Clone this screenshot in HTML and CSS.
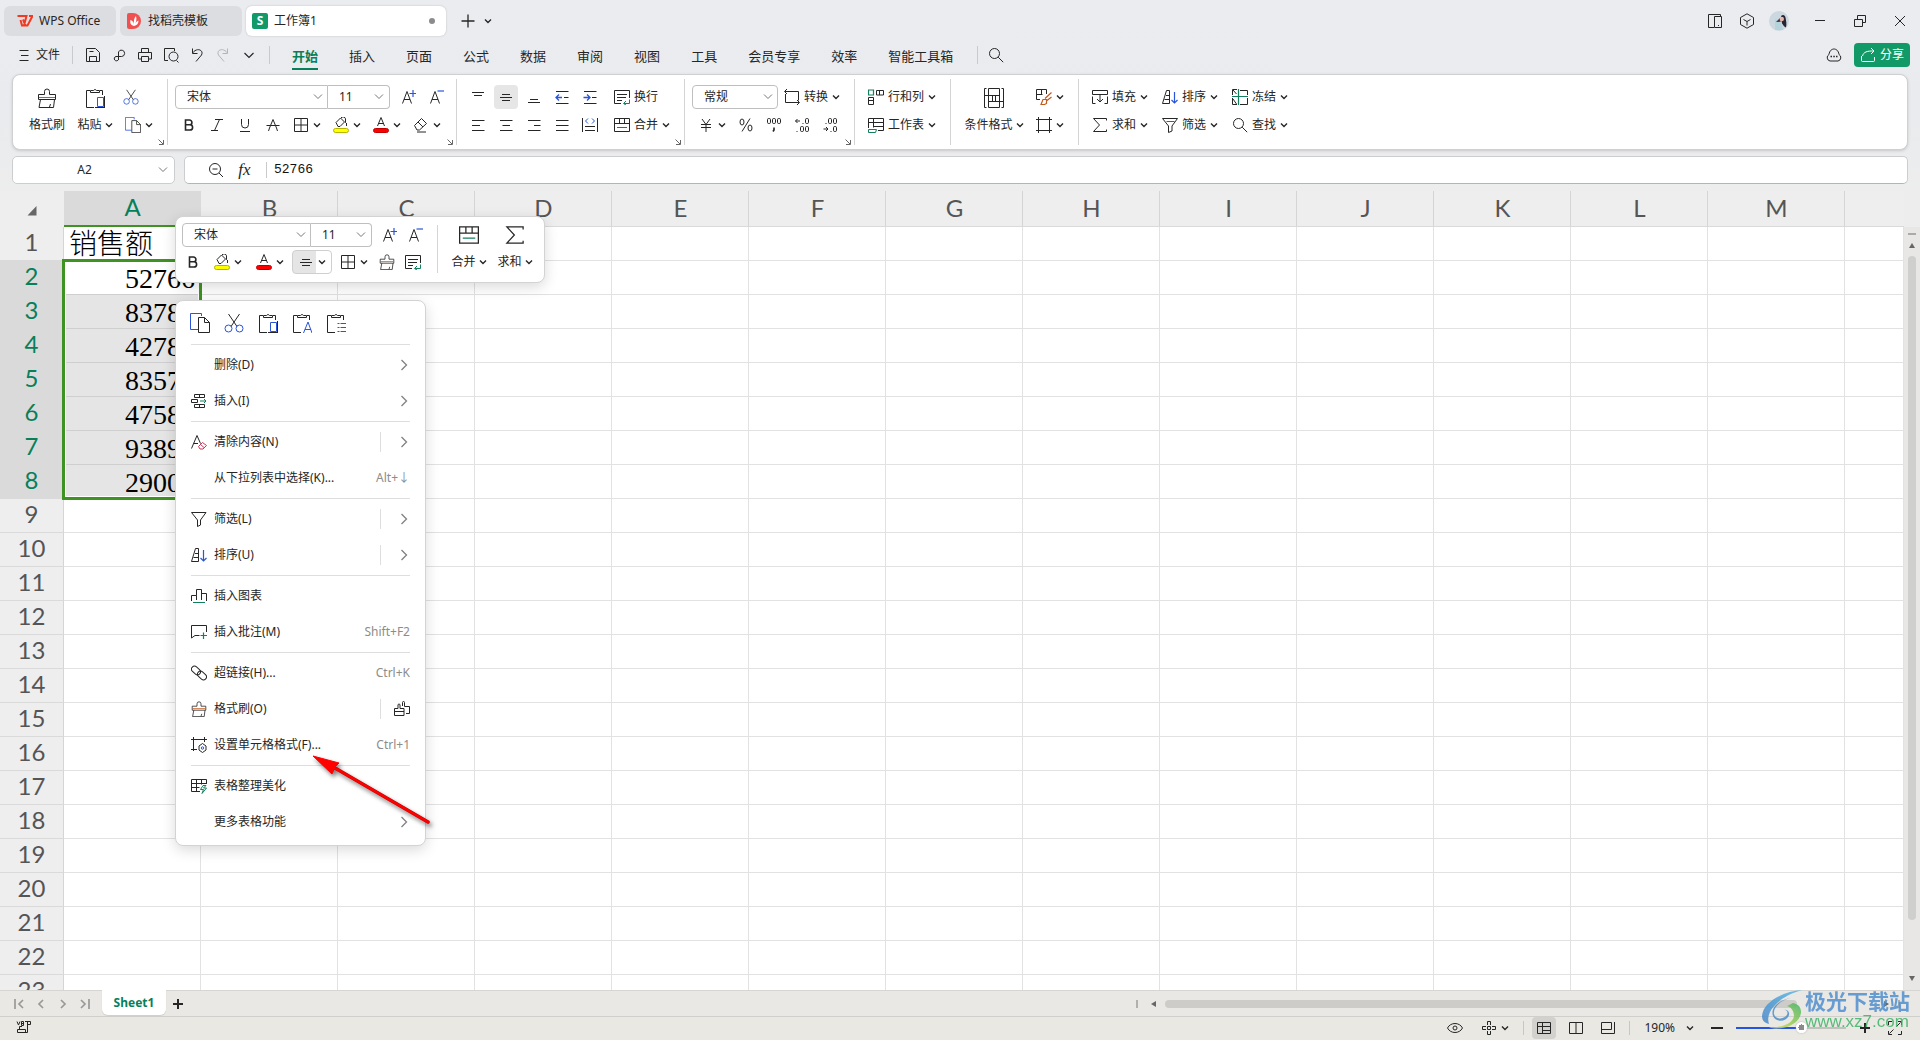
FILE: index.html
```html
<!DOCTYPE html>
<html lang="zh-CN">
<head>
<meta charset="utf-8">
<title>工作簿1 - WPS Office</title>
<link rel="stylesheet" href="styles.css">
</head>
<body>
<svg class="sprite" aria-hidden="true">
  <symbol id="chev" viewBox="0 0 8 8"><path d="M1 2.500 4 5.500 7 2.500" stroke-width="1.400"/></symbol>
  <symbol id="chevl" viewBox="0 0 12 12"><path d="M1.500 4 6 8.500 10.500 4" stroke-width="1.200"/></symbol>
  <symbol id="right" viewBox="0 0 12 12"><path d="M3.500 1 8.500 6 3.500 11" stroke="#808080" stroke-width="1.300"/></symbol>
  <symbol id="launch" viewBox="0 0 6 6"><path d="M.5.5 5 5M5.500 1v4.500H1" stroke="#666"/></symbol>
  <symbol id="burger" viewBox="0 0 16 16"><path d="M3.500 3.500h9M5 8.500h7.500M3.500 13.500h9"/></symbol>
  <symbol id="save" viewBox="0 0 16 16"><path d="M1.500 1.500h9l4 4v9h-13zM4.500 14.500v-5h7v5M4.500 4.500h4"/></symbol>
  <symbol id="exportp" viewBox="0 0 16 16"><path d="M7.500 13V5a3.200 3.200 0 1 1 3.200 4.500H5a2.200 2.200 0 1 0 2.500 3"/></symbol>
  <symbol id="print" viewBox="0 0 16 16"><path d="M4.500 5V1.500h7V5M4.500 12H1.500V5.500h13V12h-3M4.500 9.500h7v5h-7z"/></symbol>
  <symbol id="preview" viewBox="0 0 16 16"><path d="M5 13.500H1.500v-12h10V4M13.500 13.500l2 2"/><circle cx="10.500" cy="9.500" r="4.500"/></symbol>
  <symbol id="undo" viewBox="0 0 16 16"><path d="M3.500 1.500v5h5M3.500 6C8 0 15 3 12.500 8L7 14.500"/></symbol>
  <symbol id="redo" viewBox="0 0 16 16"><path d="M12.500 1.500v5h-5M12.500 6C8 0 1 3 3.500 8L9 14.500"/></symbol>
  <symbol id="search" viewBox="0 0 16 16"><circle cx="6.500" cy="6.500" r="5"/><path d="M10.200 10.200l5 5"/></symbol>
  <symbol id="zoomout" viewBox="0 0 16 16"><circle cx="7" cy="7" r="5.500"/><path d="M11 11l4 4M4.500 7h5"/></symbol>
  <symbol id="brush" viewBox="0 0 20 20"><path d="M1.500 6.500h6v-3a2.500 2.500 0 0 1 5 0v3h6v5h-17zM3.500 11.500l-1.500 8h14.500l1-8M12.500 19l1-3"/><path d="M2 9.500h16" stroke="#c55a1e"/></symbol>
  <symbol id="paste" viewBox="0 0 20 20"><path d="M9 19.500H1.500v-17H5M5.500 4.500h9v-2h-3a1.700 1.700 0 0 0-3 0h-3zM15 2.500h2.500V7"/><path d="M12.500 9.500h6v9h-6z" stroke="#2a55d8"/><path d="M10 19.500h10M19.500 8v12"/></symbol>
  <symbol id="pastea" viewBox="0 0 20 20"><path d="M9 19.500H1.500v-17H5M5.500 4.500h9v-2h-3a1.700 1.700 0 0 0-3 0h-3zM15 2.500h2.500V7"/><path d="M11.500 20l4.500-11 4 11M13 16.500h6" stroke="#2a55d8"/></symbol>
  <symbol id="pastel" viewBox="0 0 20 20"><path d="M9 19.500H1.500v-17H5M5.500 4.500h9v-2h-3a1.700 1.700 0 0 0-3 0h-3zM15 2.500h2.500V7"/><path d="M11.500 10.500h2M11.500 14.500h2M11.500 18.500h2M14.500 10.500H20M14.500 14.500H20M14.500 18.500H20" stroke="#2a55d8"/></symbol>
  <symbol id="cut" viewBox="0 0 20 20"><path d="M4.500 1l8.500 12.500M15.500 1L7 13.500"/><g stroke="#2a55d8"><circle cx="4.500" cy="15.500" r="3.500"/><circle cx="15.500" cy="15.500" r="3.500"/></g></symbol>
  <symbol id="copy" viewBox="0 0 20 20"><path d="M8 16.500H.5V.5h11V3" stroke="#2a55d8"/><path d="M8.500 4.500h6l5 5v10h-11zM14.500 4.500v5h5"/></symbol>
  <symbol id="aplus" viewBox="0 0 16 16"><path d="M1.500 14.500 6 2.500l4.500 12M3 10.500h6"/><path d="M8.500 4.500H15M12 1v7" stroke="#2a55d8" stroke-width="1.200"/></symbol>
  <symbol id="aminus" viewBox="0 0 16 16"><path d="M1.500 14.500 6 2.500l4.500 12M3 10.500h6"/><path d="M8.500 2H15" stroke="#2a55d8" stroke-width="1.200"/></symbol>
  <symbol id="bold" viewBox="0 0 16 16"><path d="M4.500 3h4a2.300 2.300 0 0 1 0 4.800h-4zM4.500 7.800H9a2.600 2.600 0 0 1 0 5.200H4.500z" stroke-width="1.600"/></symbol>
  <symbol id="italic" viewBox="0 0 16 16"><path d="M6 2.500h8M2 13.500h7M10.500 2.500l-5 11"/></symbol>
  <symbol id="under" viewBox="0 0 16 16"><path d="M4.500 2v5.500a3.500 3.500 0 0 0 7 0V2M3 14.500h10"/></symbol>
  <symbol id="strike" viewBox="0 0 16 16"><path d="M8 2.500 4.500 11M8 2.500 11.500 11M1.500 8.500h13M4.500 11 3.500 14M11.500 11l1 3"/></symbol>
  <symbol id="border" viewBox="0 0 16 16"><path d="M1.500 1.500h13v13h-13zM8 1.500v13M1.500 8h13"/></symbol>
  <symbol id="fill" viewBox="0 0 16 16"><path d="M3 5.500 7.500 1l4 4-4.500 4.500h-2zM8 .8a2.500 2 0 0 1 4.500 1v4M13.500 6v3"/><rect x=".5" y="11.500" width="15" height="4" rx="2" fill="#ff0" stroke="#b5b500"/></symbol>
  <symbol id="color" viewBox="0 0 16 16"><path d="M4.500 9 8 .5 11.500 9M5.800 6.500h4.500"/><rect x=".5" y="11.500" width="15" height="4" rx="2" fill="#f00" stroke="#c00000"/></symbol>
  <symbol id="erase" viewBox="0 0 16 16"><path d="M1.500 8.500l7-7 5 5-7 6.500h-2.500zM5 5l5 5M4 15h9"/></symbol>
  <symbol id="atop" viewBox="0 0 16 16"><path d="M2 3.500h12M4 6.500h8"/></symbol>
  <symbol id="amid" viewBox="0 0 16 16"><path d="M4 5.500h8M2 8.500h12M4 11.500h8"/></symbol>
  <symbol id="abot" viewBox="0 0 16 16"><path d="M4 10.500h8M2 13.500h12"/></symbol>
  <symbol id="outdent" viewBox="0 0 16 16"><path d="M2 2.500h12.500M10 8.500h4.500M2 14.500h12.500"/><path d="M8 8.500H2M5 5.500l-3 3 3 3" stroke="#2a55d8" stroke-width="1.300"/></symbol>
  <symbol id="indent" viewBox="0 0 16 16"><path d="M2 2.500h12.500M10 8.500h4.500M2 14.500h12.500"/><path d="M1.500 8.500h6M5 5.500l3 3-3 3" stroke="#2a55d8" stroke-width="1.300"/></symbol>
  <symbol id="aleft" viewBox="0 0 16 16"><path d="M2 3.500h12.500M2 8.500h8M2 13.500h12.500"/></symbol>
  <symbol id="acen" viewBox="0 0 16 16"><path d="M2 3.500h12.500M4.500 8.500h7.500M2 13.500h12.500"/></symbol>
  <symbol id="aright" viewBox="0 0 16 16"><path d="M2 3.500h12.500M8 8.500h6.500M2 13.500h12.500"/></symbol>
  <symbol id="ajust" viewBox="0 0 16 16"><path d="M2 3.500h12.500M2 8.500h12.500M2 13.500h12.500"/></symbol>
  <symbol id="dist" viewBox="0 0 16 16"><path d="M.5 1v14M15.500 1v14M3 9.500h10M3 13.500h10"/><path d="M6 1.500 3.500 4 6 6.500M10 1.500 12.500 4 10 6.500" stroke="#2a55d8"/></symbol>
  <symbol id="wrap" viewBox="0 0 16 16"><path d="M15.500 9V1.500H.5v13H7M3 5.500h10M3 8.500h9M3 11.500h5"/><path d="M15.500 10.500v4H10M12 12l-2.500 2.500L12 16" stroke="#12805c"/></symbol>
  <symbol id="merge" viewBox="0 0 16 16"><path d="M.5 1.500h15v13H.5zM.5 6.500h15M5.500 1.500v5M10.500 1.500v5"/><path d="M3 10.500h10" stroke="#12805c"/></symbol>
  <symbol id="convert" viewBox="0 0 16 16"><path d="M3 0 .5 2.500 3 5M1 2.500h13.500v9M1.500 5v8.500H15M13 11l2.500 2.500L13 16"/></symbol>
  <symbol id="yen" viewBox="0 0 16 16"><path d="M4 2l4 5.500L12 2M8 7.500V15M3 7.500h10M3 10.500h10"/></symbol>
  <symbol id="pct" viewBox="0 0 16 16"><path d="M12 1.500 4 14.500"/><ellipse cx="4" cy="5" rx="2" ry="3"/><ellipse cx="12" cy="11" rx="2" ry="3"/></symbol>
  <symbol id="thou" viewBox="0 0 16 16"><rect x="1.500" y="1.500" width="3" height="5" rx="1.200"/><rect x="6.500" y="1.500" width="3" height="5" rx="1.200"/><rect x="11.500" y="1.500" width="3" height="5" rx="1.200"/><path d="M8 10.500v2.500l-1 1.500" stroke-width="1.600"/></symbol>
  <symbol id="incd" viewBox="0 0 16 16"><path d="M6 4H1.500M3.500 2l-2 2 2 2M8.500 6.500h1M2.500 14.500h1"/><rect x="11.500" y="1.500" width="3" height="5" rx="1.200"/><rect x="6.500" y="9.500" width="3" height="5" rx="1.200"/><rect x="11.500" y="9.500" width="3" height="5" rx="1.200"/></symbol>
  <symbol id="decd" viewBox="0 0 16 16"><path d="M1.500 12H6M4 10l2 2-2 2M8.500 14.500h1M3.500 6.500h1"/><rect x="6.500" y="1.500" width="3" height="5" rx="1.200"/><rect x="11.500" y="1.500" width="3" height="5" rx="1.200"/><rect x="11.500" y="9.500" width="3" height="5" rx="1.200"/></symbol>
  <symbol id="rowcol" viewBox="0 0 16 16"><path d="M8.500 1.500h7v4.500h-7zM11.500 1.500V6M.5 8.500h5v7h-5zM.5 11.500h5"/><path d="M.5 1H5.500v5H.5z" stroke="#12805c" stroke-width="1.200"/></symbol>
  <symbol id="wsheet" viewBox="0 0 16 16"><path d="M.5 11V1.500h15v12H10M.5 5.500h15M5.500 1.500v9M5.500 9.500H15"/><path d="M.5 12.500h8l-1 3h-7z" stroke="#12805c"/></symbol>
  <symbol id="condf" viewBox="0 0 20 20"><path d="M2.500.5h-2v19h2M17.500.5h2v19h-2M4.500.5h11v19h-11zM.5 7.500h15M4.500 13.500h15M8.500 7.500v6M11.500 7.500v6"/></symbol>
  <symbol id="cellst" viewBox="0 0 16 16"><path d="M4 10.500H.5V.5h10V5M.5 5.500h6M5.500.5v5"/><path d="M15.500 3.500 9 9.500M15.500 8 11 11.500M5 15.500l2-5h3.500v4l-2 1z" stroke="#c55a1e" stroke-width="1.200"/></symbol>
  <symbol id="frame" viewBox="0 0 16 16"><path d="M0 2.500h16M0 13.500h16M2.500 0v16M13.500 0v16"/></symbol>
  <symbol id="fillin" viewBox="0 0 16 16"><path d="M.5 5.500v-4h15v4zM.5 7.500v7h3M15.500 7.500v7h-3M8 6v6.500M5 10l3 3 3-3"/></symbol>
  <symbol id="sort" viewBox="0 0 16 16"><path d="M.5 14.500 4.500 1.500h3v13zM2.500 10.500h5M4 6.500h3.500"/><path d="M12.500 3v11M9.500 11l3 3 3-3" stroke="#2a55d8" stroke-width="1.200"/></symbol>
  <symbol id="freeze" viewBox="0 0 16 16"><path d="M5 .5H.5V6M1 1l3.500 4M8 1.500h7.500V6M.5 9v6.500H5M1 10l3.500 5M8 15.500h7.500V9"/><path d="M0 7.500h16M6.500 0v16" stroke="#12805c" stroke-width="1.200"/></symbol>
  <symbol id="sum" viewBox="0 0 16 16"><path d="M14.500 3.500v-2h-13L7.500 8l-6 6.500h13v-2"/></symbol>
  <symbol id="filter" viewBox="0 0 16 16"><path d="M.5 1.500h14.500L9.500 9v5l-3 1.500V9z"/></symbol>
  <symbol id="filterg" viewBox="0 0 16 16"><path d="M.5 1.500h15L10 9v5l-3.500 1.500V9z"/><path d="M4.500 4.500h8" stroke="#12805c"/></symbol>
  <symbol id="ins" viewBox="0 0 16 16"><path d="M3.500 1.500h10v3h-10zM8.500 1.500v3M.5 6.500h6v3h-6zM3.500 11.500h10v3h-10zM8.500 11.500v3"/><path d="M9 8h6M13 6l2 2-2 2" stroke="#12805c"/></symbol>
  <symbol id="clear" viewBox="0 0 16 16"><path d="M.5 14.500 6 1.500l3.500 8M2.500 9.500H7"/><path d="M7.500 12.500 11.500 8.500 15.500 11.500 12 15H9zM9.500 10.500l3.500 3" stroke="#d0365a"/></symbol>
  <symbol id="chart" viewBox="0 0 16 16"><path d="M.5 13V7.500h5V12M5.500 7.500v-6h5V12M10.500 5.500h5V13"/><path d="M2 14.500h12" stroke="#12805c"/></symbol>
  <symbol id="note" viewBox="0 0 16 16"><path d="M8.500 11.500H4L.5 14V1.500h15V8"/><path d="M9.500 11.500H16M12.500 8.500v6.500" stroke="#12805c" stroke-width="1.200"/></symbol>
  <symbol id="link" viewBox="0 0 16 16"><rect x="0" y="2.500" width="10" height="6" rx="3" transform="rotate(42 5 5.500)"/><rect x="6" y="7.500" width="10" height="6" rx="3" transform="rotate(42 11 10.500)"/></symbol>
  <symbol id="brushes" viewBox="0 0 16 16"><path d="M.5 7.500h3.500V4a1 1 0 0 1 2 0v3.500H10v7H.5zM.5 10.500H10M8.500 5V1.500a1 1 0 0 1 2 0v4h5v7H12"/></symbol>
  <symbol id="cellfmt" viewBox="0 0 16 16"><path d="M0 2.500h16M2.500 0v14M0 12.500h6M13.500 0v5"/><path d="M8 9l3.500-2.500L15 9v4l-3.500 2.500L8 13z"/><circle cx="11.500" cy="11" r="1.200" stroke="#2a55d8"/></symbol>
  <symbol id="beaut" viewBox="0 0 16 16"><path d="M9 13.500H.5v-12h15V6M.5 5.500h15M.5 9.500h8M5.500 1.500v12M10.500 1.500v5"/><path d="M12 7.500l-2.500 4h3l-1.500 4 4.500-5.500h-3l2.500-2.500z" stroke="#12805c"/></symbol>
  <symbol id="panel" viewBox="0 0 16 16"><path d="M7 14.500H1.500v-13h12V3M7.500 3.500h7v11h-7zM11 12.500h1"/></symbol>
  <symbol id="cube" viewBox="0 0 16 16"><path d="M8 .8l6.500 3.700v7L8 15.200 1.500 11.500v-7zM4.500 6.500 8 8.500l3.500-2M8 8.500v4"/></symbol>
  <symbol id="min" viewBox="0 0 16 16"><path d="M3 7.500h10"/></symbol>
  <symbol id="restore" viewBox="0 0 16 16"><path d="M2.500 6.500h8v7h-8zM5.500 6V2.500h8v7H11"/></symbol>
  <symbol id="close" viewBox="0 0 16 16"><path d="M3 3l10 10M13 3 3 13"/></symbol>
  <symbol id="cloud" viewBox="0 0 16 16"><path d="M4 14a3.500 3.500 0 0 1-1-6.500C3.500 3.500 6 2 8 2s4.500 1.500 5 5.500A3.500 3.500 0 0 1 12 14z"/><path d="M4.500 9.500h1.500M7.300 9.500h1.500M10 9.500h1.500" stroke-width="1.500"/></symbol>
  <symbol id="share" viewBox="0 0 16 16"><path d="M1.500 9v4.500a1 1 0 0 0 1 1h11a1 1 0 0 0 1-1V10M2.500 9C3.500 5 7 3.800 14 4M11 1l3 3-3 3"/></symbol>
  <symbol id="plus" viewBox="0 0 16 16"><path d="M8 1.500v13M1.500 8h13" stroke-width="1.300"/></symbol>
  <symbol id="first" viewBox="0 0 16 16"><path d="M4 3v10M12 4 8 8l4 4" stroke-width="1.700"/></symbol>
  <symbol id="prev" viewBox="0 0 16 16"><path d="M10 4 6 8l4 4" stroke-width="1.700"/></symbol>
  <symbol id="next" viewBox="0 0 16 16"><path d="M6 4l4 4-4 4" stroke-width="1.700"/></symbol>
  <symbol id="last" viewBox="0 0 16 16"><path d="M4 4l4 4-4 4M12 3v10" stroke-width="1.700"/></symbol>
  <symbol id="macro" viewBox="0 0 16 16"><path d="M1 1.500 2.500 5 4 1.500M5.500 1.500v4h2v-4zM5.500 3.500h2M9 1.500h5.500v3H12M11.500 1.500v11H3.500M1.500 12.500v-3h8v3h-8M3.500 9V6.500H6"/></symbol>
  <symbol id="eye" viewBox="0 0 16 16"><path d="M.5 8C3.500 2 12.500 2 15.500 8 12.500 14 3.500 14 .5 8z"/><circle cx="8" cy="8" r="2"/></symbol>
  <symbol id="target" viewBox="0 0 16 16"><path d="M6.500 5V1.500h3V5M6.500 11v3.500h3V11M5 6.500H1.500v3H5M11 6.500h3.500v3H11M6.500 6.500h3v3h-3z"/></symbol>
  <symbol id="vnorm" viewBox="0 0 16 16"><path d="M1.500 2.500h13v11h-13zM1.500 6.500h13M6.500 2.500v11M6.500 10.500h8"/></symbol>
  <symbol id="vpage" viewBox="0 0 16 16"><path d="M1.500 2.500h13v11h-13zM8 2.500v11"/></symbol>
  <symbol id="vread" viewBox="0 0 16 16"><path d="M1.500 2.500h10v7h-10zM1.500 9v4.500h13V2"/></symbol>
  <symbol id="full" viewBox="0 0 16 16"><path d="M1.500 5V1.500H5M11 1.500h3.500V5M14.500 11v3.500H11M5 14.500H1.500V11M9.500 6.500l4-4M6.500 9.500l-4 4"/></symbol>
</svg>

<header class="titlebar">
  <nav class="doc-tabs">
    <button class="doc-tab home"><svg class="i" viewBox="0 0 16 16"><path d="M.5 3h9l-2.500 9.500h-2L3.500 7M6 6.500l2.500 6h2L15.500 3H12" stroke="#f23a22" stroke-width="2"/></svg>WPS Office</button>
    <button class="doc-tab shop"><svg class="i" viewBox="0 0 16 16"><path d="M3 0h4a8 8 0 0 1 0 16H3a2 2 0 0 1-2-2V2a2 2 0 0 1 2-2z" fill="#f0504f" stroke="none"/><path d="M8 13C4 12 4 9 4.500 7 7 8 7.500 9 8 12c-.5-4 0-7 2-9 1 4 0 6-1 8 1-2 2-3 3.500-3.500 0 3-1.500 5-4.500 5.500z" fill="#fff" stroke="none"/></svg>找稻壳模板</button>
    <button class="doc-tab current"><span class="s-badge">S</span>工作簿1<span class="dot"></span></button>
  </nav>
  <button class="bare"><svg class="i"><use href="#plus"/></svg></button>
  <button class="bare slim"><svg class="c"><use href="#chev"/></svg></button>
  <div class="window-tools">
    <button class="bare"><svg class="i"><use href="#panel"/></svg></button>
    <button class="bare"><svg class="i"><use href="#cube"/></svg></button>
    <button class="bare" aria-label="账号"><svg class="avatar" viewBox="0 0 20 20"><circle cx="10" cy="10" r="10" fill="#ccd8df" stroke="none"/><path d="M6 8.500l5 .5 3 10-8 0z" fill="#b5d3da" stroke="none"/><path d="M12 5c2-2 4-1 4.500 1.500.5 3 1.500 6 .5 10-2-1-2.500-2-4-4z" fill="#2b2331" stroke="none"/><path d="M7 11l4-4 2 3-3 1z" fill="#4a3a44" stroke="none"/><circle cx="12.800" cy="8" r="2.200" fill="#e2b9ae" stroke="none"/></svg></button>
    <button class="bare win"><svg class="i"><use href="#min"/></svg></button>
    <button class="bare win"><svg class="i"><use href="#restore"/></svg></button>
    <button class="bare win"><svg class="i"><use href="#close"/></svg></button>
  </div>
</header>

<div class="menubar">
  <button class="file"><svg class="i"><use href="#burger"/></svg>文件</button>
  <span class="rule"></span>
  <div class="quick">
    <button class="bare"><svg class="i"><use href="#save"/></svg></button>
    <button class="bare"><svg class="i"><use href="#exportp"/></svg></button>
    <button class="bare"><svg class="i"><use href="#print"/></svg></button>
    <button class="bare"><svg class="i"><use href="#preview"/></svg></button>
    <button class="bare"><svg class="i"><use href="#undo"/></svg></button>
    <button class="bare off"><svg class="i"><use href="#redo"/></svg></button>
    <button class="bare"><svg class="i12"><use href="#chevl"/></svg></button>
  </div>
  <span class="rule"></span>
  <nav class="ribbon-tabs">
    <button class="on">开始</button><button>插入</button><button>页面</button><button>公式</button><button>数据</button><button>审阅</button><button>视图</button><button>工具</button><button>会员专享</button><button>效率</button><button>智能工具箱</button>
  </nav>
  <span class="rule"></span>
  <button class="bare"><svg class="i"><use href="#search"/></svg></button>
  <div class="share-box">
    <button class="bare"><svg class="i"><use href="#cloud"/></svg></button>
    <button class="share"><svg class="i"><use href="#share"/></svg>分享</button>
  </div>
</div>

<section class="ribbon">
  <div class="group clipboard">
    <button class="big-btn"><svg class="i20"><use href="#brush"/></svg><span>格式刷</span></button>
    <button class="big-btn"><svg class="i20"><use href="#paste"/></svg><span>粘贴<svg class="c"><use href="#chev"/></svg></span></button>
    <div class="rows">
      <div class="row"><button class="ib tight"><svg class="i"><use href="#cut"/></svg></button></div>
      <div class="row"><button class="ib dd"><svg class="i"><use href="#copy"/></svg><svg class="c"><use href="#chev"/></svg></button></div>
    </div>
    <svg class="launch"><use href="#launch"/></svg>
  </div>
  <div class="group font">
    <div class="rows">
      <div class="row">
        <div class="fontbox"><select class="font-name" aria-label="字体"><option>宋体</option></select><select class="font-size" aria-label="字号"><option>11</option></select></div>
        <button class="ib"><svg class="i"><use href="#aplus"/></svg></button><button class="ib"><svg class="i"><use href="#aminus"/></svg></button>
      </div>
      <div class="row">
        <button class="ib"><svg class="i"><use href="#bold"/></svg></button><button class="ib"><svg class="i"><use href="#italic"/></svg></button><button class="ib"><svg class="i"><use href="#under"/></svg></button><button class="ib"><svg class="i"><use href="#strike"/></svg></button>
        <button class="ib dd"><svg class="i"><use href="#border"/></svg><svg class="c"><use href="#chev"/></svg></button>
        <button class="ib dd"><svg class="i"><use href="#fill"/></svg><svg class="c"><use href="#chev"/></svg></button>
        <button class="ib dd"><svg class="i"><use href="#color"/></svg><svg class="c"><use href="#chev"/></svg></button>
        <button class="ib dd"><svg class="i"><use href="#erase"/></svg><svg class="c"><use href="#chev"/></svg></button>
      </div>
    </div>
    <svg class="launch"><use href="#launch"/></svg>
  </div>
  <div class="group">
    <div class="rows">
      <div class="row">
        <button class="ib"><svg class="i"><use href="#atop"/></svg></button><button class="ib pressed"><svg class="i"><use href="#amid"/></svg></button><button class="ib"><svg class="i"><use href="#abot"/></svg></button><button class="ib"><svg class="i"><use href="#outdent"/></svg></button><button class="ib"><svg class="i"><use href="#indent"/></svg></button>
        <button class="tb spaced"><svg class="i"><use href="#wrap"/></svg>换行</button>
      </div>
      <div class="row">
        <button class="ib"><svg class="i"><use href="#aleft"/></svg></button><button class="ib"><svg class="i"><use href="#acen"/></svg></button><button class="ib"><svg class="i"><use href="#aright"/></svg></button><button class="ib"><svg class="i"><use href="#ajust"/></svg></button><button class="ib"><svg class="i"><use href="#dist"/></svg></button>
        <button class="tb spaced"><svg class="i"><use href="#merge"/></svg>合并<svg class="c"><use href="#chev"/></svg></button>
      </div>
    </div>
    <svg class="launch"><use href="#launch"/></svg>
  </div>
  <div class="group">
    <div class="rows">
      <div class="row">
        <select class="num-format" aria-label="数字格式"><option>常规</option></select>
        <button class="tb"><svg class="i"><use href="#convert"/></svg>转换<svg class="c"><use href="#chev"/></svg></button>
      </div>
      <div class="row">
        <button class="ib dd"><svg class="i"><use href="#yen"/></svg><svg class="c"><use href="#chev"/></svg></button>
        <button class="ib"><svg class="i"><use href="#pct"/></svg></button><button class="ib"><svg class="i"><use href="#thou"/></svg></button><button class="ib"><svg class="i"><use href="#incd"/></svg></button><button class="ib"><svg class="i"><use href="#decd"/></svg></button>
      </div>
    </div>
    <svg class="launch"><use href="#launch"/></svg>
  </div>
  <div class="group">
    <div class="rows">
      <div class="row"><button class="tb"><svg class="i"><use href="#rowcol"/></svg>行和列<svg class="c"><use href="#chev"/></svg></button></div>
      <div class="row"><button class="tb"><svg class="i"><use href="#wsheet"/></svg>工作表<svg class="c"><use href="#chev"/></svg></button></div>
    </div>
  </div>
  <div class="group">
    <button class="big-btn wide"><svg class="i20"><use href="#condf"/></svg><span>条件格式<svg class="c"><use href="#chev"/></svg></span></button>
    <div class="rows">
      <div class="row"><button class="ib dd"><svg class="i"><use href="#cellst"/></svg><svg class="c"><use href="#chev"/></svg></button></div>
      <div class="row"><button class="ib dd"><svg class="i"><use href="#frame"/></svg><svg class="c"><use href="#chev"/></svg></button></div>
    </div>
  </div>
  <div class="group">
    <div class="rows">
      <div class="row gap2">
        <button class="tb"><svg class="i"><use href="#fillin"/></svg>填充<svg class="c"><use href="#chev"/></svg></button>
        <button class="tb"><svg class="i"><use href="#sort"/></svg>排序<svg class="c"><use href="#chev"/></svg></button>
        <button class="tb"><svg class="i"><use href="#freeze"/></svg>冻结<svg class="c"><use href="#chev"/></svg></button>
      </div>
      <div class="row gap2">
        <button class="tb"><svg class="i"><use href="#sum"/></svg>求和<svg class="c"><use href="#chev"/></svg></button>
        <button class="tb"><svg class="i"><use href="#filterg"/></svg>筛选<svg class="c"><use href="#chev"/></svg></button>
        <button class="tb"><svg class="i"><use href="#search"/></svg>查找<svg class="c"><use href="#chev"/></svg></button>
      </div>
    </div>
  </div>
</section>

<section class="formula-bar">
  <select class="name-box" aria-label="名称框"><option>A2</option></select>
  <div class="formula">
    <button class="bare"><svg class="i"><use href="#zoomout"/></svg></button>
    <button class="bare fx">fx</button>
    <span class="rule"></span>
    <input type="text" value="52766" aria-label="编辑栏">
  </div>
</section>

<main class="sheet">
  <div class="grid-wrap">
    <table class="grid">
      <colgroup><col class="num"><col span="13" class="col"><col></colgroup>
      <thead><tr><th class="corner"><svg viewBox="0 0 10 10"><path d="M9.500 0v9.500h-9z" fill="#666" stroke="none"/></svg></th><th class="sel">A</th><th>B</th><th>C</th><th>D</th><th>E</th><th>F</th><th>G</th><th>H</th><th>I</th><th>J</th><th>K</th><th>L</th><th>M</th><th></th></tr></thead>
      <tbody>
        <tr><th>1</th><td class="label">销售额<td><td><td><td><td><td><td><td><td><td><td><td><td></tr>
        <tr class="sel first"><th>2</th><td>52766<td><td><td><td><td><td><td><td><td><td><td><td><td></tr>
        <tr class="sel"><th>3</th><td>83786<td><td><td><td><td><td><td><td><td><td><td><td><td></tr>
        <tr class="sel"><th>4</th><td>42786<td><td><td><td><td><td><td><td><td><td><td><td><td></tr>
        <tr class="sel"><th>5</th><td>83576<td><td><td><td><td><td><td><td><td><td><td><td><td></tr>
        <tr class="sel"><th>6</th><td>47586<td><td><td><td><td><td><td><td><td><td><td><td><td></tr>
        <tr class="sel"><th>7</th><td>93896<td><td><td><td><td><td><td><td><td><td><td><td><td></tr>
        <tr class="sel"><th>8</th><td>29006<td><td><td><td><td><td><td><td><td><td><td><td><td></tr>
        <tr><th>9</th><td><td><td><td><td><td><td><td><td><td><td><td><td><td></tr>
        <tr><th>10</th><td><td><td><td><td><td><td><td><td><td><td><td><td><td></tr>
        <tr><th>11</th><td><td><td><td><td><td><td><td><td><td><td><td><td><td></tr>
        <tr><th>12</th><td><td><td><td><td><td><td><td><td><td><td><td><td><td></tr>
        <tr><th>13</th><td><td><td><td><td><td><td><td><td><td><td><td><td><td></tr>
        <tr><th>14</th><td><td><td><td><td><td><td><td><td><td><td><td><td><td></tr>
        <tr><th>15</th><td><td><td><td><td><td><td><td><td><td><td><td><td><td></tr>
        <tr><th>16</th><td><td><td><td><td><td><td><td><td><td><td><td><td><td></tr>
        <tr><th>17</th><td><td><td><td><td><td><td><td><td><td><td><td><td><td></tr>
        <tr><th>18</th><td><td><td><td><td><td><td><td><td><td><td><td><td><td></tr>
        <tr><th>19</th><td><td><td><td><td><td><td><td><td><td><td><td><td><td></tr>
        <tr><th>20</th><td><td><td><td><td><td><td><td><td><td><td><td><td><td></tr>
        <tr><th>21</th><td><td><td><td><td><td><td><td><td><td><td><td><td><td></tr>
        <tr><th>22</th><td><td><td><td><td><td><td><td><td><td><td><td><td><td></tr>
        <tr><th>23</th><td><td><td><td><td><td><td><td><td><td><td><td><td><td></tr>
      </tbody>
    </table>
  </div>
  <div class="vscroll"><span class="split"></span><span class="tri up"></span><span class="thumb"></span><span class="tri down"></span></div>
  <div class="selection"></div>

  <div class="mini">
    <div class="mini-left">
      <div class="row">
        <div class="fontbox"><select class="font-name" aria-label="字体"><option>宋体</option></select><select class="font-size" aria-label="字号"><option>11</option></select></div>
        <button class="ib"><svg class="i"><use href="#aplus"/></svg></button><button class="ib"><svg class="i"><use href="#aminus"/></svg></button>
      </div>
      <div class="row gap2">
        <button class="ib"><svg class="i"><use href="#bold"/></svg></button>
        <button class="ib dd"><svg class="i"><use href="#fill"/></svg><svg class="c"><use href="#chev"/></svg></button>
        <button class="ib dd"><svg class="i"><use href="#color"/></svg><svg class="c"><use href="#chev"/></svg></button>
        <button class="ib dd boxed"><svg class="i"><use href="#amid"/></svg><svg class="c"><use href="#chev"/></svg></button>
        <button class="ib dd"><svg class="i"><use href="#border"/></svg><svg class="c"><use href="#chev"/></svg></button>
        <div class="pair"><button class="ib"><svg class="i"><use href="#brush"/></svg></button><button class="ib"><svg class="i"><use href="#wrap"/></svg></button></div>
      </div>
    </div>
    <div class="mini-right">
      <button class="big-btn"><svg class="i20"><use href="#merge"/></svg><span>合并<svg class="c"><use href="#chev"/></svg></span></button>
      <button class="big-btn"><svg class="i20"><use href="#sum"/></svg><span>求和<svg class="c"><use href="#chev"/></svg></span></button>
    </div>
  </div>

  <div class="context">
    <div class="clip">
      <button class="bare"><svg class="i20"><use href="#copy"/></svg></button><button class="bare"><svg class="i20"><use href="#cut"/></svg></button><button class="bare"><svg class="i20"><use href="#paste"/></svg></button><button class="bare"><svg class="i20"><use href="#pastea"/></svg></button><button class="bare"><svg class="i20"><use href="#pastel"/></svg></button>
    </div>
    <hr>
    <button class="mi"><svg class="i"></svg>删除(D)<span class="more"><svg class="r"><use href="#right"/></svg></span></button>
    <button class="mi"><svg class="i"><use href="#ins"/></svg>插入(I)<span class="more"><svg class="r"><use href="#right"/></svg></span></button>
    <hr>
    <button class="mi"><svg class="i"><use href="#clear"/></svg>清除内容(N)<span class="more cut"><svg class="r"><use href="#right"/></svg></span></button>
    <button class="mi"><svg class="i"></svg>从下拉列表中选择(K)...<kbd>Alt+↓</kbd></button>
    <hr>
    <button class="mi"><svg class="i"><use href="#filter"/></svg>筛选(L)<span class="more cut"><svg class="r"><use href="#right"/></svg></span></button>
    <button class="mi"><svg class="i"><use href="#sort"/></svg>排序(U)<span class="more cut"><svg class="r"><use href="#right"/></svg></span></button>
    <hr>
    <button class="mi"><svg class="i"><use href="#chart"/></svg>插入图表</button>
    <button class="mi"><svg class="i"><use href="#note"/></svg>插入批注(M)<kbd>Shift+F2</kbd></button>
    <hr>
    <button class="mi"><svg class="i"><use href="#link"/></svg>超链接(H)...<kbd>Ctrl+K</kbd></button>
    <button class="mi"><svg class="i"><use href="#brush"/></svg>格式刷(O)<span class="more cut"><svg class="i"><use href="#brushes"/></svg></span></button>
    <button class="mi"><svg class="i"><use href="#cellfmt"/></svg>设置单元格格式(F)...<kbd>Ctrl+1</kbd></button>
    <hr>
    <button class="mi"><svg class="i"><use href="#beaut"/></svg>表格整理美化</button>
    <button class="mi"><svg class="i"></svg>更多表格功能<span class="more"><svg class="r"><use href="#right"/></svg></span></button>
  </div>
  <svg class="pointer" viewBox="0 0 130 80"><path d="M28 17 121 71" stroke="#c00" stroke-width="3.500" stroke-linecap="round"/><path d="M28 17 121 71" stroke="#fe0000" stroke-width="2.500" stroke-linecap="round"/><path d="M6 5 32 12 28 16 25 23z" fill="#fe0000" stroke="#fe0000"/></svg>
</main>

<footer class="sheetbar">
  <div class="sheet-nav">
    <button class="bare"><svg class="i"><use href="#first"/></svg></button><button class="bare"><svg class="i"><use href="#prev"/></svg></button><button class="bare"><svg class="i"><use href="#next"/></svg></button><button class="bare"><svg class="i"><use href="#last"/></svg></button>
  </div>
  <button class="sheet-tab">Sheet1</button>
  <button class="bare add"><svg class="i12" viewBox="0 0 12 12"><path d="M6 1v10M1 6h10" stroke-width="2"/></svg></button>
  <div class="hscroll"><span class="split"></span><span class="tri left"></span><span class="thumb"></span><span class="tri next"></span><span class="split"></span></div>
</footer>

<footer class="status">
  <button class="bare"><svg class="i"><use href="#macro"/></svg></button>
  <div class="status-tools">
    <button class="bare"><svg class="i"><use href="#eye"/></svg></button>
    <button class="ib dd"><svg class="i"><use href="#target"/></svg><svg class="c"><use href="#chev"/></svg></button>
    <span class="rule"></span>
    <button class="view on"><svg class="i"><use href="#vnorm"/></svg></button>
    <button class="view"><svg class="i"><use href="#vpage"/></svg></button>
    <button class="view"><svg class="i"><use href="#vread"/></svg></button>
    <span class="rule"></span>
    <button class="zoom">190%<svg class="c"><use href="#chev"/></svg></button>
    <button class="bare"><svg class="i12" viewBox="0 0 12 12"><path d="M0 6h12" stroke-width="2"/></svg></button>
    <input class="slider" type="range" min="0" max="100" value="61" aria-label="缩放">
    <button class="bare"><svg class="i12" viewBox="0 0 12 12"><path d="M6 1v10M1 6h10" stroke-width="2"/></svg></button>
    <button class="bare fullscreen"><svg class="i"><use href="#full"/></svg></button>
  </div>
</footer>

<div class="watermark">
  <svg viewBox="0 0 42 42"><defs><linearGradient id="wb" x1="0" y1="1" x2="1" y2="0"><stop offset="0" stop-color="#4a86c8"/><stop offset="1" stop-color="#55b9e8"/></linearGradient><linearGradient id="wg" x1="0" y1="1" x2="1" y2="0"><stop offset="0" stop-color="#e3e04a"/><stop offset="1" stop-color="#45b567"/></linearGradient></defs><path d="M41 1C24 2 2 12 1 27c0 5 3 7 7 8C4 24 16 8 41 1z" fill="url(#wb)" stroke="none"/><path d="M30 9c-10 2-18 9-17 16 1 5 8 6 12 2 3-3 1-7-3-6 2-1 7 0 6 5-2 7-13 8-16 1-3-8 6-16 18-18z" fill="#4a8fce" stroke="none"/><path d="M32 14c12 2 11 18-6 24-7 2-13 2-18 0 14 1 24-4 25-11 0-5-3-9-7-10z" fill="url(#wg)" stroke="none"/></svg>
  <div><b>极光下载站</b><i>www.xz7.com</i></div>
</div>
</body>
</html>
```

FILE: styles.css
```css
* { box-sizing: border-box; }

html, body { height: 100%; }

body {
  margin: 0;
  display: flex;
  flex-direction: column;
  position: relative;
  overflow: hidden;
  background: linear-gradient(#ebecf0 0, #e9ebee 120px, #ededed 190px, #ededed 900px, #eae8e4 990px);
  color: #262626;
  font: 12px/16px "Noto Sans", "Noto Sans CJK SC", sans-serif;
}

button, select, input, kbd { font: inherit; color: inherit; margin: 0; }
button { border: 0; background: none; padding: 0; display: flex; align-items: center; white-space: nowrap; }

svg { fill: none; stroke: currentColor; stroke-width: 1; flex: none; display: block; }
.sprite { display: none; }
.i { width: 16px; height: 16px; }
.i20 { width: 20px; height: 20px; }
.i12 { width: 12px; height: 12px; }
.c { width: 8px; height: 8px; }
.r { width: 12px; height: 12px; }

.bare { width: 26px; height: 24px; justify-content: center; }
.bare.slim { width: 14px; }
.rule { width: 1px; height: 18px; background: #c9cacd; flex: none; }

/* title bar */
.titlebar { height: 40px; display: flex; align-items: center; padding: 2px 0 0 4px; flex: none; }
.doc-tabs { display: flex; gap: 4px; margin-right: 9px; }
.doc-tab { height: 30px; border-radius: 6px; background: #dcdde0; gap: 6px; padding: 0 6px; }
.doc-tab.home { width: 112px; padding-left: 13px; }
.doc-tab.shop { width: 122px; }
.doc-tab.current { width: 200px; background: #fff; box-shadow: 0 0 2px #b9bbbf; padding-right: 11px; }
.s-badge { width: 16px; height: 16px; border-radius: 2px; background: #119a68; color: #fff; font-weight: 700; text-align: center; }
.dot { width: 6px; height: 6px; border-radius: 50%; background: #8b8b8d; margin-left: auto; }
.window-tools { margin-left: auto; display: flex; align-items: center; gap: 6px; }
.window-tools .win { width: 40px; margin-left: -6px; }
.window-tools .win:nth-of-type(4) { margin-left: 2px; }
.avatar { width: 20px; height: 20px; }

/* menu bar */
.menubar { height: 34px; display: flex; align-items: center; padding: 0 10px 4px 16px; flex: none; }
.file { gap: 4px; margin-right: 12px; }
.quick { display: flex; margin: 0 7px; }
.off { color: #b3b4b7; }
.ribbon-tabs { display: flex; gap: 31px; margin: 0 24px 0 22px; font-size: 13px; line-height: 20px; }
.ribbon-tabs button { height: 26px; border-bottom: 2px solid transparent; margin-top: 3px; }
.ribbon-tabs .on { color: #07805a; border-color: #07805a; font-weight: 700; }
.menubar > .bare { margin-left: 5px; }
.share-box { margin-left: auto; display: flex; align-items: center; gap: 7px; }
.share { height: 24px; width: 56px; border-radius: 4px; background: #119a68; color: #fff; gap: 4px; justify-content: center; }

/* ribbon */
.ribbon { margin: 0 12px; padding: 4px 0; display: flex; flex: none; background: #fff; border: 1px solid #cfd0d2; border-radius: 8px; box-shadow: 0 1px 3px #c8c8ca; height: 76px; }
.group { position: relative; display: flex; padding: 4px 8px 0 7px; border-right: 1px solid #d4d4d4; }
.group.clipboard { padding-left: 10px; }
.group.font { padding-right: 5px; }
.group:last-child { border: 0; }
.row { display: flex; align-items: center; height: 28px; }
.gap2 { gap: 2px; }
.ib { width: 28px; height: 24px; justify-content: center; }
.ib.dd { width: 40px; gap: 4px; }
.ib.tight { width: 24px; }
.ib.pressed { width: 24px; margin: 0 2px; background: #e6e6e6; border-radius: 4px; }
.tb { height: 24px; padding: 0 6px; gap: 4px; }
.tb.spaced { margin-left: 4px; }
.big-btn { flex-direction: column; width: 48px; height: 56px; padding-top: 5px; gap: 9px; }
.big-btn.wide { width: 72px; }
.big-btn span { display: flex; align-items: center; gap: 3px; height: 16px; }
.launch { position: absolute; right: 3px; bottom: 0; width: 6px; height: 6px; }

select {
  appearance: none;
  height: 24px;
  border: 1px solid #bfbfbf;
  border-radius: 4px;
  padding: 0 24px 0 11px;
  background: #fff url("data:image/svg+xml,%3Csvg xmlns='http://www.w3.org/2000/svg' width='10' height='6'%3E%3Cpath d='M1 .5 5 4.500 9 .5' fill='none' stroke='%23777'/%3E%3C/svg%3E") no-repeat right 4px center;
}
.fontbox { display: flex; margin-right: 5px; }
.font-name { width: 153px; border-radius: 4px 0 0 4px; }
.font-size { width: 62px; border-radius: 0 4px 4px 0; border-left: 0; background-position: right 5px center; }
.num-format { width: 86px; }

/* formula bar */
.formula-bar { display: flex; gap: 9px; margin: 6px 12px 0; flex: none; }
.name-box { width: 163px; height: 28px; border-radius: 5px; border-color: #cccdcf; text-align: center; text-align-last: center; padding: 0 26px 0 8px; background-position: right 6px center; }
.formula { flex: 1; height: 28px; display: flex; align-items: center; background: #fff; border: 1px solid #cccdcf; border-bottom-color: #b3b4b5; border-radius: 5px; padding-left: 16px; }
.formula .bare { width: 29px; }
.fx { font: italic 17px/20px "Liberation Serif", serif; }
.formula .rule { margin: 0 7px; height: 16px; }
.formula input { flex: 1; border: 0; padding: 0; background: none; color: #111; font: 13px/20px "Liberation Mono", monospace; }

/* sheet */
.sheet { position: relative; flex: 1; min-height: 0; display: flex; margin-top: 7px; overflow: hidden; }
.grid-wrap { flex: 1; min-width: 0; overflow: hidden; }
.grid { table-layout: fixed; width: 100%; border-collapse: separate; border-spacing: 0; }
.num { width: 64px; }
.col { width: 137px; }
.grid th { height: 34px; padding: 0 0 3px; background: #eee; border-right: 1px solid #d5d5d5; border-bottom: 1px solid #dadada; color: #555; font: 24px/30px Lato, "Open Sans", sans-serif; }
.grid thead th { height: 36px; padding: 0 0 2px 1px; }
.grid thead th:last-child { border-right: 0; }
.grid thead .sel { background: #dadada; color: #07805a; border-right-color: #dadada; border-bottom: 2px solid #3f9322; }
.grid thead .corner { border-color: #eee; padding: 5px 0 0 27px; }
.corner svg { width: 10px; height: 10px; }
.grid td { height: 34px; padding: 3px 5px 0; background: #fff; border-right: 1px solid #e2e2e2; border-bottom: 1px solid #e2e2e2; color: #000; font: 28px/30px "Liberation Serif", "Noto Sans CJK SC", serif; text-align: right; overflow: hidden; white-space: nowrap; }
.grid .label { text-align: left; font-weight: 300; }
.grid .sel th { background: #dadada; color: #07805a; border-color: #dadada; }
.grid .sel td:nth-child(2) { background: #e5e5e5; border-color: #cfcfcf; }
.grid .first td:nth-child(2) { background: #fff; }
.selection { position: absolute; left: 62px; top: 68px; width: 140px; height: 241px; border: 3px solid #3f9322; box-shadow: inset 0 0 0 1px #fff; }

.vscroll { width: 16px; margin-top: 36px; background: #e8e7e5; display: flex; flex-direction: column; align-items: center; gap: 8px; padding: 6px 0; flex: none; }
.vscroll .split { width: 8px; height: 2px; background: #aaa; }
.vscroll .thumb { width: 8px; height: 664px; flex: 0 1 auto; border-radius: 4px; background: #cfcfcd; }
.tri { width: 0; height: 0; border: 3px solid transparent; flex: none; }
.up { border-bottom: 5px solid #666; border-top: 0; }
.down { border-top: 5px solid #666; border-bottom: 0; margin-top: auto; margin-bottom: 3px; }

/* floating toolbar */
.mini, .context { position: absolute; left: 175px; background: #fff; border: 1px solid #d3d3d3; border-radius: 8px; box-shadow: 0 4px 14px rgba(0, 0, 0, .15); }
.mini { top: 25px; height: 67px; display: flex; padding: 4px 6px; }
.mini-left .row:last-child { height: 26px; margin-left: -2px; }
.mini .font-name { width: 129px; }
.mini .font-size { width: 61px; }
.mini-left .row .ib:not(.dd) { width: 26px; }
.pair { display: flex; margin-left: -2px; }
.ib.boxed { border: 1px solid #cfcfcf; border-radius: 4px; background: linear-gradient(90deg, #e5e5e5 23px, #fff 23px); }
.mini-right { display: flex; margin: 4px 0 5px 8px; border-left: 1px solid #d4d4d4; padding-left: 8px; }
.mini-right .big-btn { width: 46px; height: 50px; padding-top: 0; gap: 9px; }

/* context menu */
.context { top: 109px; width: 251px; padding: 0 15px 5px; }
.clip { display: flex; gap: 14px; height: 41px; padding-top: 3px; margin-left: -1px; align-items: center; }
.clip .bare { width: 20px; }
.context hr { height: 1px; margin: 2px 0; border: 0; background: #dedede; }
.mi { width: 100%; height: 36px; gap: 7px; text-align: left; }
.mi kbd { margin-left: auto; color: #8c8c8c; }
.more { margin-left: auto; height: 20px; width: 30px; display: flex; align-items: center; justify-content: flex-end; }
.more.cut { border-left: 1px solid #dedede; }
.pointer { position: absolute; left: 307px; top: 560px; width: 130px; height: 80px; filter: drop-shadow(2px 3px 2px rgba(0, 0, 0, .5)); }

/* sheet tabs */
.sheetbar { height: 27px; display: flex; align-items: center; flex: none; background: #eae8e4; border-top: 1px solid #d6d5d2; border-bottom: 1px solid #d0cfcb; }
.sheet-nav { display: flex; padding-left: 8px; color: #999; width: 102px; }
.sheet-nav .bare { width: 22px; }
.sheet-tab { width: 64px; height: 25px; margin-top: -2px; justify-content: center; background: #fff; border-radius: 0 0 6px 6px; box-shadow: 0 1px 1px #cfcecb; color: #07805a; font-weight: 700; }
.add { width: 24px; }
.hscroll { margin-left: auto; width: 41%; display: flex; align-items: center; gap: 9px; padding: 0 20px 0 3px; }
.hscroll .split { width: 2px; height: 8px; background: #b1b0ad; }
.hscroll .thumb { width: 632px; height: 8px; border-radius: 4px; background: #cdccc8; flex: 0 1 auto; }
.left { border-right: 5px solid #666; border-left: 0; margin-left: 4px; }
.tri.next { border-left: 5px solid #666; border-right: 0; margin-left: auto; }

/* status bar */
.status { height: 23px; flex: none; display: flex; align-items: center; padding: 0 12px 2px 11px; background: #eae8e3; }
.status-tools { margin-left: auto; display: flex; align-items: center; }
.status-tools .ib { margin: 0 7px 0 7px; }
.status .rule { height: 14px; margin: 0 8px 0 1px; background: #c9c7c3; }
.view { width: 24px; height: 22px; justify-content: center; border-radius: 4px; margin-right: 8px; }
.view.on { background: #d3d1cd; }
.zoom { gap: 11px; margin: 0 10px 0 6px; }
.slider { appearance: none; width: 110px; height: 12px; margin: 0 6px; background: linear-gradient(90deg, #2554e0 61%, #c2c0bc 61%) no-repeat center / 100% 2px; }
.slider::-webkit-slider-thumb { appearance: none; width: 11px; height: 11px; border-radius: 50%; background: radial-gradient(#8a8a8a 0 3px, #fff 3px); box-shadow: 0 0 2px #aaa; }
.fullscreen { margin-left: 4px; }

/* site mark */
.watermark { position: absolute; right: 10px; bottom: 9px; display: flex; gap: 2px; opacity: .85; pointer-events: none; }
.watermark svg { width: 42px; height: 42px; }
.watermark b { display: block; font-size: 21px; line-height: 24px; color: #4f8fcf; }
.watermark i { display: block; font: 17px/17px "Liberation Sans", sans-serif; color: #3fb368; }
```
